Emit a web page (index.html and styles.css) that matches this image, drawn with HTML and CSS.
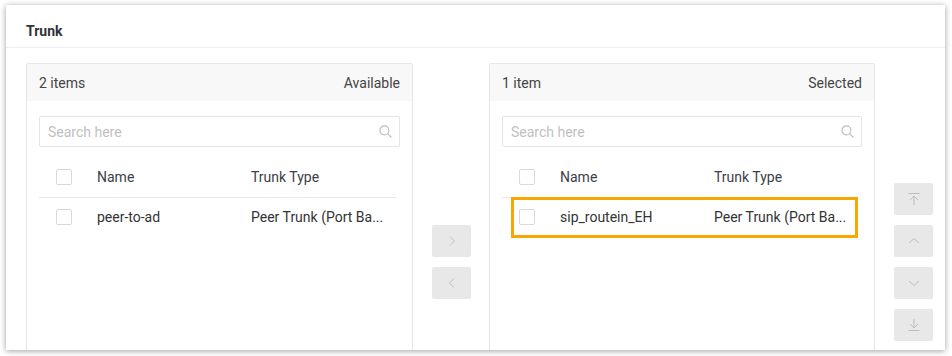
FILE: index.html
```html
<!DOCTYPE html>
<html lang="en">
<head>
  <meta charset="UTF-8">
  <title>Trunk</title>
  <link rel="stylesheet" href="styles.css">
</head>
<body>
  <div class="card">
    <div class="card-header">Trunk</div>
    <div class="transfer">
      <!-- Available list -->
      <div class="panel">
        <div class="panel-header">
          <span>2 items</span>
          <span>Available</span>
        </div>
        <div class="panel-body">
          <div class="search">
            <span class="placeholder">Search here</span>
            <svg class="search-icon" viewBox="0 0 14 14" width="13" height="13">
              <circle cx="5.8" cy="5.8" r="4.8" fill="none" stroke="#bcbcbc" stroke-width="1.2"/>
              <path d="M9.3 9.3 L13 13" stroke="#bcbcbc" stroke-width="1.3" stroke-linecap="round"/>
            </svg>
          </div>
          <div class="list">
            <div class="row head">
              <div class="cell check"><span class="box"></span></div>
              <div class="cell">Name</div>
              <div class="cell type">Trunk Type</div>
            </div>
            <div class="row">
              <div class="cell check"><span class="box"></span></div>
              <div class="cell">peer-to-ad</div>
              <div class="cell type" title="Peer Trunk (Port Based)">Peer Trunk (Port Ba...</div>
            </div>
          </div>
        </div>
      </div>

      <div class="ops">
        <button class="op">
          <svg viewBox="0 0 12 12" width="12" height="12"><path d="M4 1.5 L8.5 6 L4 10.5" fill="none" stroke="#bdbdbd" stroke-width="1"/></svg>
        </button>
        <button class="op">
          <svg viewBox="0 0 12 12" width="12" height="12"><path d="M8 1.5 L3.5 6 L8 10.5" fill="none" stroke="#bdbdbd" stroke-width="1"/></svg>
        </button>
      </div>

      <!-- Selected list -->
      <div class="panel">
        <div class="panel-header">
          <span>1 item</span>
          <span>Selected</span>
        </div>
        <div class="panel-body">
          <div class="search">
            <span class="placeholder">Search here</span>
            <svg class="search-icon" viewBox="0 0 14 14" width="13" height="13">
              <circle cx="5.8" cy="5.8" r="4.8" fill="none" stroke="#bcbcbc" stroke-width="1.2"/>
              <path d="M9.3 9.3 L13 13" stroke="#bcbcbc" stroke-width="1.3" stroke-linecap="round"/>
            </svg>
          </div>
          <div class="list">
            <div class="row head">
              <div class="cell check"><span class="box"></span></div>
              <div class="cell">Name</div>
              <div class="cell type">Trunk Type</div>
            </div>
            <div class="row marked">
              <div class="cell check"><span class="box"></span></div>
              <div class="cell">sip_routein_EH</div>
              <div class="cell type" title="Peer Trunk (Port Based)">Peer Trunk (Port Ba...</div>
              <span class="highlight"></span>
            </div>
          </div>
        </div>
      </div>

      <div class="sort">
        <button class="op">
          <svg viewBox="0 0 14 14" width="14" height="14"><path d="M1.5 1.5 H12.5 M7 4 V13 M3 8 L7 4 L11 8" fill="none" stroke="#bdbdbd" stroke-width="1"/></svg>
        </button>
        <button class="op">
          <svg viewBox="0 0 14 14" width="14" height="14"><path d="M2 9 L7 4.5 L12 9" fill="none" stroke="#bdbdbd" stroke-width="1"/></svg>
        </button>
        <button class="op">
          <svg viewBox="0 0 14 14" width="14" height="14"><path d="M2 5 L7 9.5 L12 5" fill="none" stroke="#bdbdbd" stroke-width="1"/></svg>
        </button>
        <button class="op">
          <svg viewBox="0 0 14 14" width="14" height="14"><path d="M7 1 V10 M3 6 L7 10 L11 6 M1.5 12.5 H12.5" fill="none" stroke="#bdbdbd" stroke-width="1"/></svg>
        </button>
      </div>
    </div>
  </div>
</body>
</html>
```

FILE: styles.css
```css
body {
  margin: 0;
  background: #fff;
  font-family: Roboto, "Liberation Sans", sans-serif;
  font-size: 14px;
  color: #333;
}

.card {
  margin: 5px 7px 6px 6px;
  width: 939px;
  height: 345px;
  background: #fff;
  box-shadow: 0 1px 6px rgba(0, 0, 0, 0.38);
  overflow: hidden;
}

.card-header {
  padding: 16px 20px 6px;
  line-height: 20px;
  font-size: 14px;
  font-weight: bold;
  color: #2f3339;
  border-bottom: 1px solid #eee;
}

.transfer {
  display: flex;
  align-items: flex-start;
  padding: 15px 12px 0 20px;
}

.panel {
  width: 385px;
  height: 320px;
  border: 1px solid #e6e6e6;
  border-radius: 2px;
  flex-shrink: 0;
}

.panel + .ops + .panel {
  width: 384px;
}

.panel-header {
  height: 37px;
  padding: 0 12px;
  display: flex;
  align-items: center;
  justify-content: space-between;
  background: #f8f8f8;
  color: #444;
}

.panel-body {
  padding: 15px 12px 0;
}

.search {
  height: 29px;
  border: 1px solid #e4e4e4;
  border-radius: 2px;
  display: flex;
  align-items: center;
  justify-content: space-between;
  padding: 0 7px 0 8px;
}

.placeholder {
  color: #bfbfbf;
}

.search-icon {
  margin-top: -1px;
}

.list {
  margin: 10px 4px 0 0;
}

.row {
  position: relative;
  display: grid;
  grid-template-columns: 58px 154px 1fr;
  align-items: center;
  height: 36px;
  color: #333;
}

.row.head {
  height: 40px;
  border-bottom: 1px solid #e8e8e8;
  color: #3b4049;
}

.row:not(.head) {
  padding-top: 1px;
}

.cell {
  white-space: nowrap;
}

.cell.check {
  padding-left: 17px;
  display: flex;
}

.box {
  width: 14px;
  height: 14px;
  border: 1px solid #d9d9d9;
  border-radius: 2px;
  background: #fff;
}

.highlight {
  position: absolute;
  left: 9px;
  right: 0;
  top: -1px;
  bottom: -3px;
  border: 3px solid #f6a700;
}

.ops {
  width: 39px;
  padding: 162px 18px 0 19px;
  display: flex;
  flex-direction: column;
  gap: 10px;
}

.sort {
  width: 39px;
  margin-left: 19px;
  padding-top: 120px;
  display: flex;
  flex-direction: column;
  gap: 10px;
}

.op {
  width: 39px;
  height: 32px;
  padding: 0;
  border: none;
  border-radius: 2px;
  background: #e8e8e8;
  display: flex;
  align-items: center;
  justify-content: center;
}
```
